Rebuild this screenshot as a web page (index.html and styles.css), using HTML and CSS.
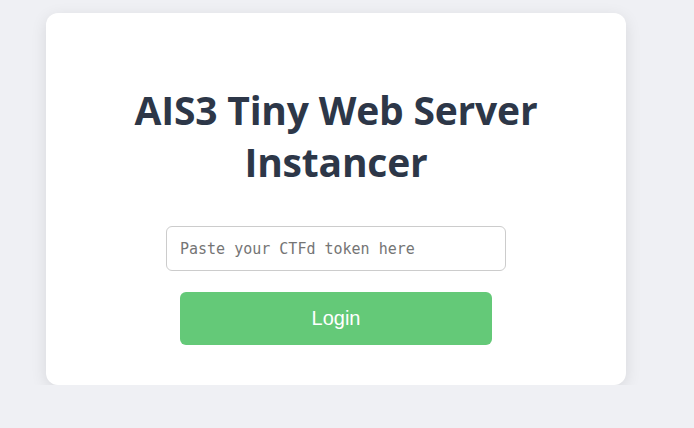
FILE: index.html
```html
<!DOCTYPE html>
<html lang="en">
<head>
<meta charset="utf-8">
<title>AIS3 Tiny Web Server Instancer</title>
<link rel="stylesheet" href="styles.css">
</head>
<body>
<main class="card">
  <h1 class="title">AIS3 Tiny Web Server Instancer</h1>
  <form class="login-form">
    <input class="token-input" type="text" placeholder="Paste your CTFd token here">
    <button class="login-btn" type="button">Login</button>
  </form>
</main>
</body>
</html>
```

FILE: styles.css
```css
html, body {
  margin: 0;
  padding: 0;
}
body {
  background: #eff0f4;
  font-family: "Open Sans", "Noto Sans", sans-serif;
  display: flex;
  padding-top: 13px;
  padding-left: 46px;
}
.card {
  box-sizing: border-box;
  width: 580px;
  height: 372px;
  background: #ffffff;
  border-radius: 12px;
  box-shadow: 0 4px 16px rgba(0, 0, 0, 0.1);
  padding: 71px 40px 0;
  display: flex;
  flex-direction: column;
  align-items: center;
}
.title {
  margin: 0;
  font-size: 39px;
  line-height: 52px;
  font-weight: 700;
  color: #2d3748;
  text-align: center;
  max-width: 470px;
  letter-spacing: -0.2px;
}
.login-form {
  margin-top: 38px;
  display: flex;
  flex-direction: column;
  align-items: center;
}
.token-input {
  box-sizing: border-box;
  width: 340px;
  height: 45px;
  padding: 0 13px;
  border: 1px solid #cccccc;
  border-radius: 6px;
  font-family: "DejaVu Sans Mono", "Liberation Mono", monospace;
  font-size: 15px;
  color: #333;
  outline: none;
}
.token-input::placeholder {
  color: #757575;
}
.login-btn {
  margin-top: 21px;
  width: 312px;
  height: 53px;
  border: none;
  border-radius: 6px;
  background: #64c978;
  color: #ffffff;
  font-family: "Liberation Sans", Arial, sans-serif;
  font-size: 20px;
  cursor: pointer;
}
```
